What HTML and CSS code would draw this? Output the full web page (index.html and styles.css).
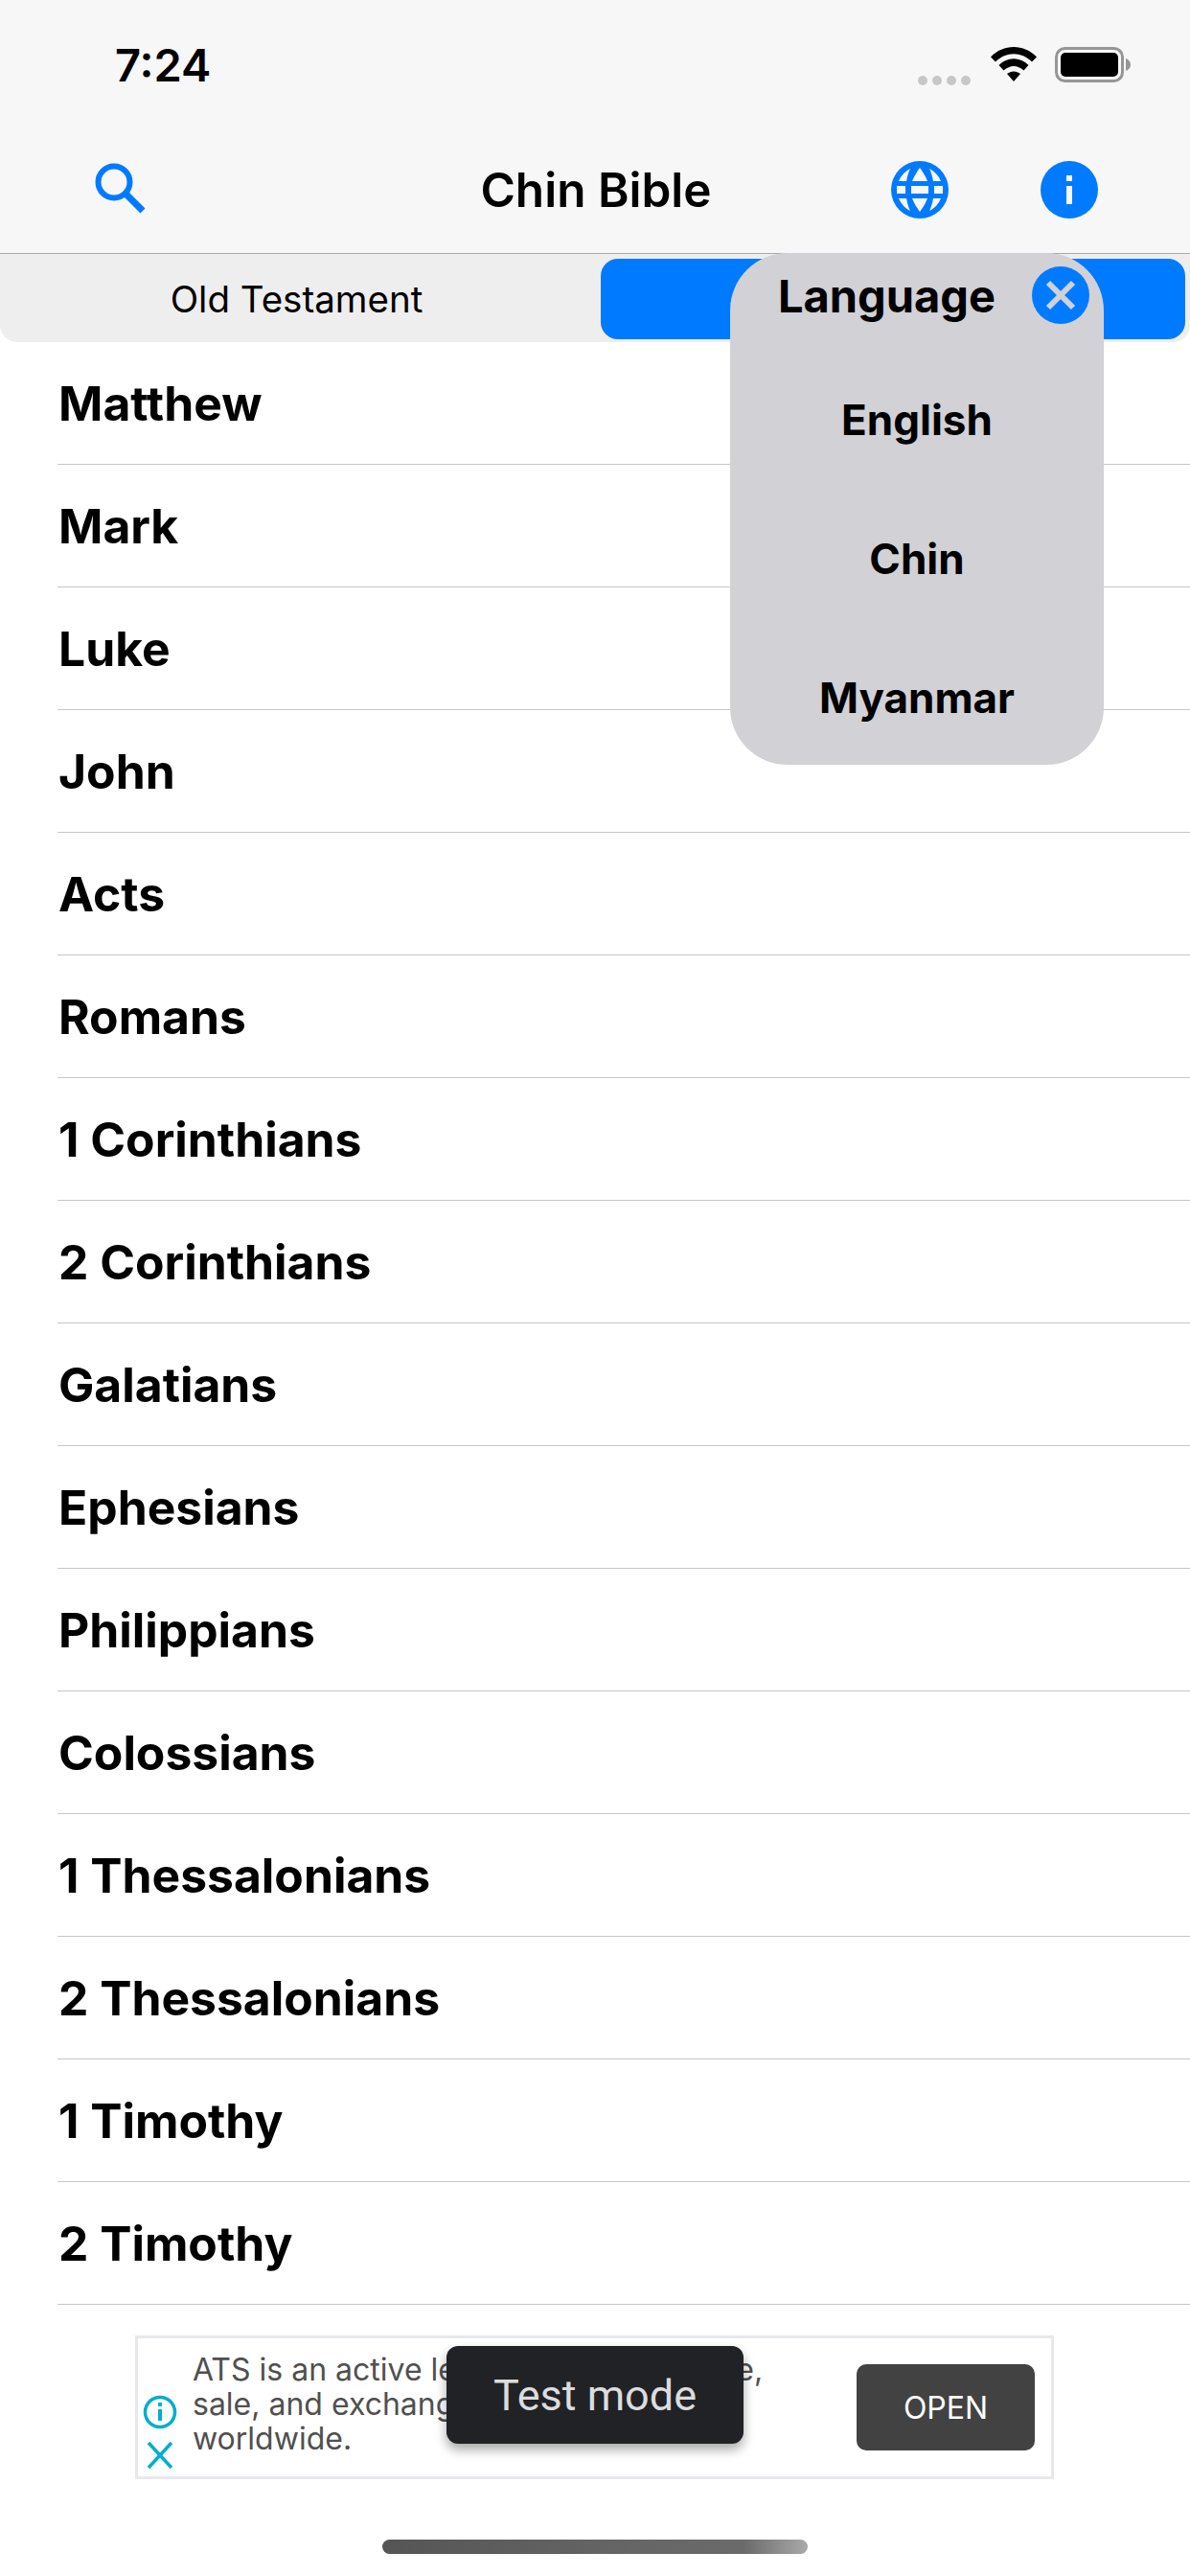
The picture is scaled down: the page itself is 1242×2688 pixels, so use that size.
FILE: index.html
```html
<!DOCTYPE html>
<html lang="en">
<head>
  <meta charset="UTF-8">
  <meta name="viewport" content="width=device-width, initial-scale=1.0">
  <title>Chin Bible</title>
  <link rel="stylesheet" href="styles.css">
</head>
<body>
  <div class="screen">
    <header class="topbar">
      <div class="status">
        <span class="time">7:24</span>
        <div class="status-icons">
          <svg class="signal" width="60" height="10" viewBox="0 0 60 10"><circle cx="5" cy="5" r="5"/><circle cx="20" cy="5" r="5"/><circle cx="35" cy="5" r="5"/><circle cx="50" cy="5" r="5"/></svg>
          <svg class="wifi" width="48" height="36" viewBox="0 0 48 36"><path d="M0 10.500C13-3.500 35-3.500 48 10.500L43 15.500C32 4.500 16 4.500 5 15.500Z"/><path d="M8.500 19C17.500 10 30.500 10 39.500 19L34.500 24.500C27.500 18.500 20.500 18.500 13.500 24.500Z"/><path d="M17 28C21.500 24.500 26.500 24.500 31 28L24 36Z"/></svg>
          <svg class="battery" width="80" height="37" viewBox="0 0 80 37"><rect x="1.500" y="1.500" width="69" height="34" rx="9" fill="none" stroke="#969696" stroke-width="3"/><rect x="6" y="6" width="60" height="25" rx="5"/><path d="M74 12C77 13 79 15.500 79 18.500S77 24 74 25Z" fill="#969696"/></svg>
        </div>
      </div>
      <nav class="navbar">
        <svg class="search-icon" width="54" height="54" viewBox="0 0 54 54" fill="none" stroke="#007aff"><circle cx="20" cy="20" r="16.500" stroke-width="6"/><path d="M32 32L50 50" stroke-width="7"/></svg>
        <h1 class="title">Chin Bible</h1>
        <div class="nav-actions">
          <svg width="60" height="60" viewBox="0 0 60 60"><circle cx="30" cy="30" r="30" fill="#007aff"/><path d="M20 8A25 25 0 0 0 8 21H16C17 16 18 12 20 8ZM40 8C42 12 43 16 44 21H52A25 25 0 0 0 40 8ZM30 7C27 11 24 16 22 21H38C36 16 33 11 30 7ZM6 26V34H15V26ZM21 26V34H39V26ZM45 26V34H54V26ZM8 39A25 25 0 0 0 20 52C18 48 17 44 16 39ZM22 39C24 44 27 49 30 53C33 49 36 44 38 39ZM44 39C43 44 42 48 40 52A25 25 0 0 0 52 39Z" fill="#f7f7f7"/></svg>
          <svg width="60" height="60" viewBox="0 0 60 60"><circle cx="30" cy="30" r="30" fill="#007aff"/><rect x="27" y="15" width="6" height="6" fill="#f7f7f7"/><rect x="27" y="26" width="6" height="19" fill="#f7f7f7"/></svg>
        </div>
      </nav>
    </header>

    <div class="segments">
      <div class="segment">Old Testament</div>
      <div class="segment segment-active">New Testament</div>
    </div>

    <ul class="books">
      <li>Matthew</li>
      <li>Mark</li>
      <li>Luke</li>
      <li>John</li>
      <li>Acts</li>
      <li>Romans</li>
      <li>1 Corinthians</li>
      <li>2 Corinthians</li>
      <li>Galatians</li>
      <li>Ephesians</li>
      <li>Philippians</li>
      <li>Colossians</li>
      <li>1 Thessalonians</li>
      <li>2 Thessalonians</li>
      <li>1 Timothy</li>
      <li>2 Timothy</li>
    </ul>

    <div class="ad">
      <div class="ad-icons">
        <svg width="36" height="36" viewBox="0 0 36 36" fill="none" stroke="#00aecd"><circle cx="18" cy="18" r="15.500" stroke-width="3.500"/><path d="M18 15V27" stroke-width="4"/><path d="M18 8V12" stroke-width="4"/></svg>
        <svg width="30" height="30" viewBox="0 0 30 30" fill="none" stroke="#00aecd" stroke-width="3.500"><path d="M3 2L27 28M27 2L3 28"/></svg>
      </div>
      <p class="ad-text">ATS is an active leader in the purchase, sale, and exchange of used items worldwide.</p>
      <div class="ad-open">OPEN</div>
    </div>

    <div class="home-bar"></div>

    <!-- overlays -->
    <div class="language-popup">
      <div class="popup-head">
        <span class="popup-title">Language</span>
        <svg class="popup-close" width="60" height="60" viewBox="0 0 60 60"><circle cx="30" cy="30" r="30" fill="#007aff"/><path d="M17 17L43 43M43 17L17 43" stroke="#d1d1d6" stroke-width="6" fill="none"/></svg>
      </div>
      <div class="popup-list">
        <div class="popup-item">English</div>
        <div class="popup-item">Chin</div>
        <div class="popup-item">Myanmar</div>
      </div>
    </div>
    <div class="toast">Test mode</div>
  </div>
</body>
</html>
```

FILE: styles.css
```css
/* Reset */
* {
  margin: 0;
  padding: 0;
  box-sizing: border-box;
}

body {
  font-family: 'Inter', 'Liberation Sans', sans-serif;
  background: #fff;
  color: #000;
}

.screen {
  position: relative;
  width: 1242px;
  height: 2688px;
  overflow: hidden;
  background: #fff;
}

/* Top bar */
.topbar {
  height: 265px;
  background: #f7f7f7;
  border-bottom: 1px solid #a9a9ab;
}

.status {
  height: 132px;
  display: flex;
  justify-content: space-between;
  padding: 44px 61px 0 120px;
}

.time {
  font-size: 47px;
  font-weight: 600;
  line-height: 47px;
}

.status-icons {
  display: flex;
  align-items: flex-start;
  padding-top: 5px;
}

.signal {
  fill: #c7c7c7;
  margin: 30px 16px 0 0;
}

.wifi {
  margin-right: 19px;
}

.navbar {
  height: 132px;
  position: relative;
  display: flex;
  align-items: center;
  justify-content: space-between;
  padding: 0 96px 0 99px;
}

.search-icon {
  margin-top: -2px;
}

.title {
  position: absolute;
  left: 2px;
  right: 0;
  text-align: center;
  font-size: 49.5px;
  font-weight: 600;
}

.nav-actions {
  display: flex;
  gap: 96px;
}

/* Segment control */
.segments {
  height: 92px;
  display: flex;
  gap: 8px;
  padding: 5px 5px 3px 0;
  background: #eee;
  border-radius: 0 0 18px 18px;
}

.segment {
  flex: 1;
  display: flex;
  align-items: center;
  justify-content: center;
  font-size: 38.5px;
}

.segment:first-child {
  flex: 0 0 619px;
}

.segment-active {
  background: #007aff;
  color: #fff;
  border-radius: 18px;
}

/* Book list */
.books {
  list-style: none;
  padding-left: 60px;
}

.books li {
  height: 128px;
  display: flex;
  align-items: center;
  padding: 1px 0 0 1px;
  font-size: 49.8px;
  font-weight: 700;
  border-bottom: 1px solid #c6c6c8;
}

/* Ad banner */
.ad {
  margin: 32px 0 0 141px;
  width: 959px;
  height: 150px;
  display: flex;
  align-items: center;
  border: 3px solid #e8e8ec;
  background: #fff;
}

.ad-icons {
  width: 46px;
  flex-shrink: 0;
  display: flex;
  flex-direction: column;
  align-items: center;
  gap: 12px;
  padding: 52px 0 0 0;
}

.ad-text {
  width: 625px;
  margin: 0 0 6px 11px;
  font-size: 32px;
  line-height: 36px;
  color: #505050;
}

.ad-open {
  width: 186px;
  height: 90px;
  margin-left: auto;
  margin-right: 17px;
  display: flex;
  align-items: center;
  justify-content: center;
  background: #424242;
  color: #fff;
  border-radius: 10px;
  font-size: 32px;
}

.home-bar {
  width: 444px;
  height: 15px;
  margin: 63px 0 0 399px;
  border-radius: 8px;
  background: linear-gradient(90deg, #555 0%, #666 60%, #6a6a6a 85%, #aaa 100%);
}

/* Language popup */
.language-popup {
  position: absolute;
  left: 762px;
  top: 264px;
  width: 390px;
  height: 534px;
  background: #d1d1d6;
  border-radius: 60px;
}

.popup-head {
  display: flex;
  align-items: center;
  justify-content: space-between;
  padding: 14px 15px 0 50px;
}

.popup-title {
  font-size: 47px;
  font-weight: 700;
}

.popup-list {
  display: flex;
  flex-direction: column;
  gap: 73px;
  margin-top: 64px;
}

.popup-item {
  height: 72px;
  display: flex;
  align-items: center;
  justify-content: center;
  font-size: 44px;
  font-weight: 700;
}

/* Test mode toast */
.toast {
  position: absolute;
  left: 466px;
  top: 2448px;
  width: 310px;
  height: 102px;
  display: flex;
  align-items: center;
  justify-content: center;
  background: #212225;
  color: #dcdcde;
  border-radius: 12px;
  box-shadow: 0 6px 12px rgba(0, 0, 0, 0.35);
  font-family: 'Roboto', 'Liberation Sans', sans-serif;
  font-size: 45px;
}
```
